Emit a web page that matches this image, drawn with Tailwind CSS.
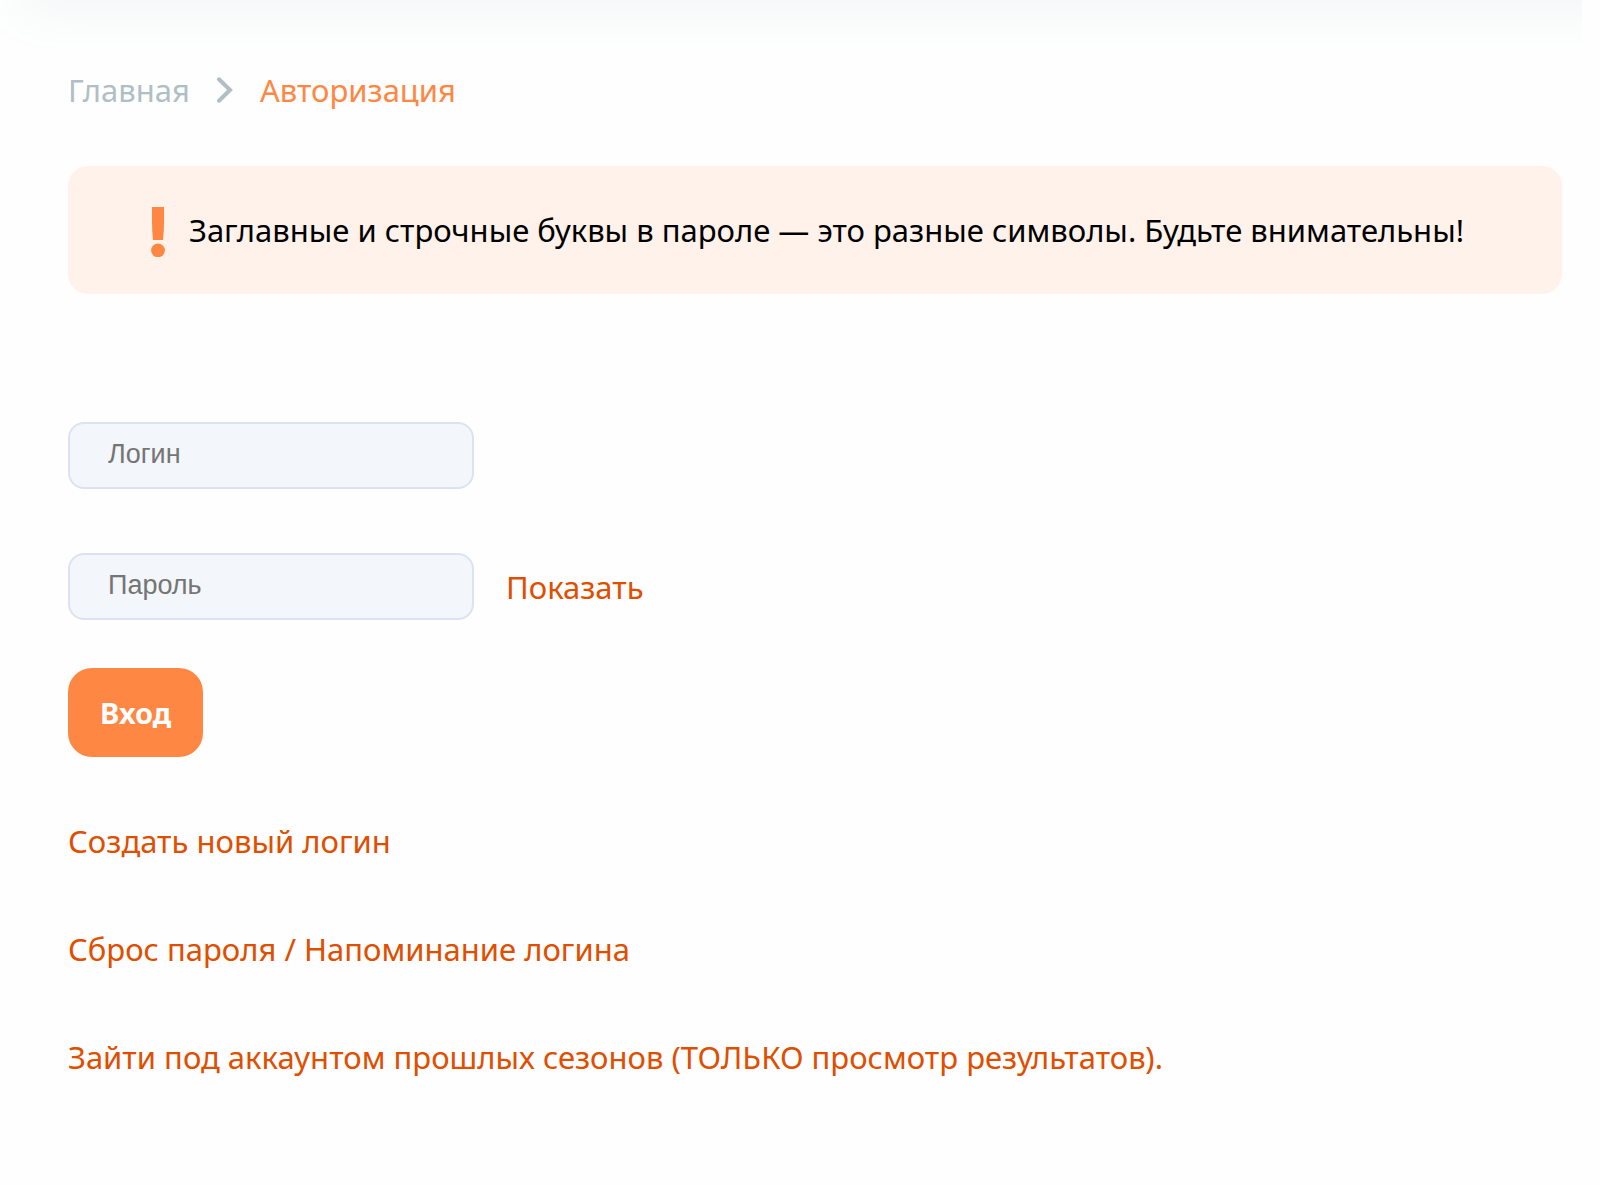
<!DOCTYPE html>
<html lang="ru">
<head>
    <meta charset="UTF-8">
    <meta name="viewport" content="width=device-width, initial-scale=1.0">
    <title>Авторизация</title>
    <script src="https://cdn.jsdelivr.net/npm/@tailwindcss/browser@4"></script>
</head>
<body class="bg-[#fefefe] text-black text-[31px] leading-10 font-['Noto_Sans',sans-serif]">
    <!-- Header shadow -->
    <div class="h-12 mr-[18px] overflow-hidden">
        <div class="h-10 -mt-10 ml-6 -mr-16 shadow-[0_0_56px_#80b0b826]"></div>
    </div>

    <main class="pl-[68px] pr-[38px] pt-[22px]">
        <!-- Breadcrumbs -->
        <nav class="flex items-center gap-[26px]">
            <a href="#" class="text-[#b0bec5]">Главная</a>
            <svg class="w-[18px] h-[26px]" viewBox="0 0 18 26" fill="none" stroke="#b0bec5" stroke-width="4" stroke-linecap="round" stroke-linejoin="miter">
                <path d="M3 2.3 L14 13 L3 23.7"/>
            </svg>
            <a href="#" class="text-[#ff8744]">Авторизация</a>
        </nav>

        <!-- Notice -->
        <div class="mt-14 flex items-center bg-[#fff2eb] rounded-[20px] h-32 pl-[83px] pr-20">
            <svg class="w-[14px] h-[54px] mr-6 shrink-0" viewBox="0 0 14 54" fill="#ff8744">
                <path d="M1 4H13V18Q13 28 12 37H2Q1 28 1 18Z"/>
                <circle cx="7" cy="47.3" r="6.9"/>
            </svg>
            <p class="whitespace-nowrap">Заглавные и строчные буквы в пароле — это разные символы. Будьте внимательны!</p>
        </div>

        <!-- Login form -->
        <form class="mt-32">
            <input type="text" aria-label="Логин" placeholder="Логин" class="block w-[406px] h-[67px] pl-[38px] pr-8 pb-0.5 rounded-2xl border-2 border-[#dde2f1] bg-[#f3f6fb] text-[27px] font-['Liberation_Sans',sans-serif] placeholder:text-[#757575]">
            <div class="mt-16 flex items-center">
                <input type="password" id="password" aria-label="Пароль" placeholder="Пароль" class="block w-[406px] h-[67px] pl-[38px] pr-8 pb-0.5 rounded-2xl border-2 border-[#dde2f1] bg-[#f3f6fb] text-[27px] font-['Liberation_Sans',sans-serif] placeholder:text-[#757575]">
                <a href="#" class="ml-8 text-[#e04e00]" onclick="togglePassword(event)">Показать</a>
            </div>
            <button type="submit" class="mt-12 block h-[89px] px-8 rounded-3xl bg-[#ff8744] text-white text-[29px] font-bold">Вход</button>
        </form>

        <!-- Links -->
        <div class="mt-16 flex flex-col items-start gap-[68px] text-[#e04e00]">
            <a href="#">Создать новый логин</a>
            <a href="#">Сброс пароля / Напоминание логина</a>
            <a href="#">Зайти под аккаунтом прошлых сезонов (ТОЛЬКО просмотр результатов).</a>
        </div>
    </main>

    <script>
        function togglePassword(e) {
            e.preventDefault();
            const input = document.getElementById("password");
            const hidden = input.type === "password";
            input.type = hidden ? "text" : "password";
            e.target.textContent = hidden ? "Скрыть" : "Показать";
        }
    </script>
</body>
</html>
